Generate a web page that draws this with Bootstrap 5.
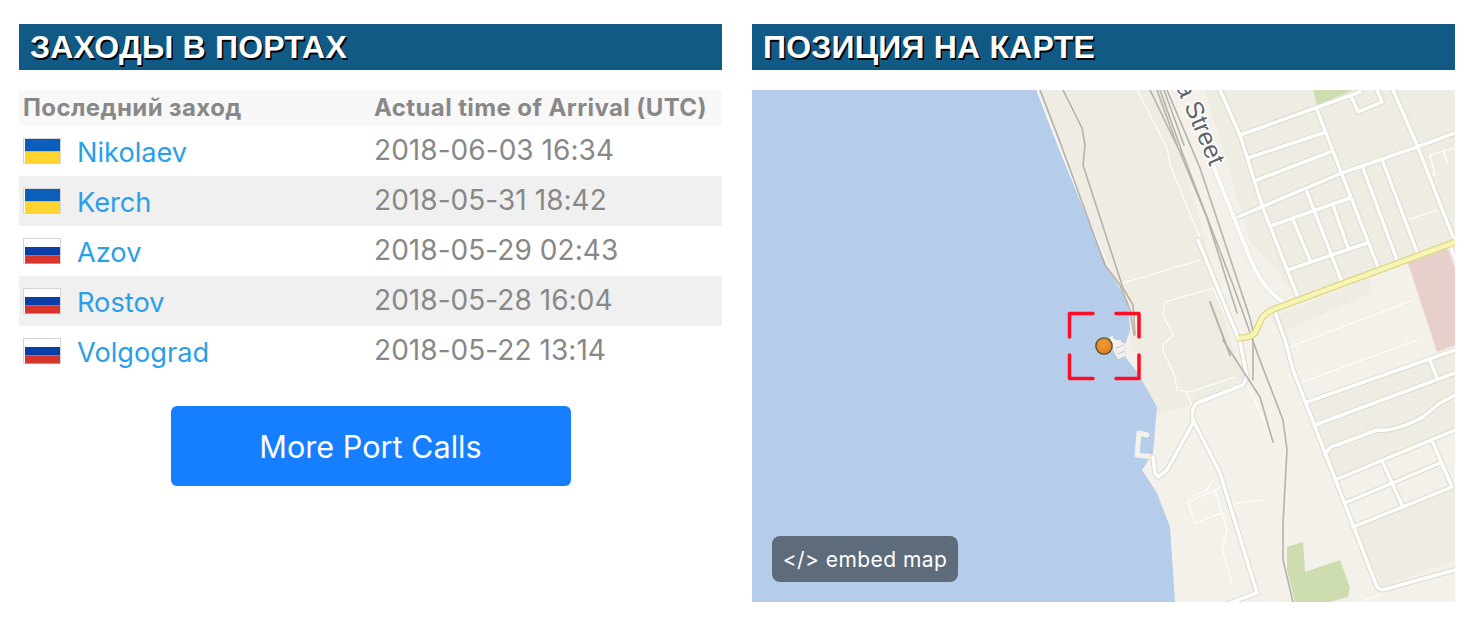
<!DOCTYPE html>
<html lang="ru">
<head>
<meta charset="utf-8">
<title>Порты</title>
<link rel="stylesheet" href="https://cdn.jsdelivr.net/npm/bootstrap@5.3.0/dist/css/bootstrap.min.css">
<style>
html,body{background:#fff;overflow:hidden}
body{font-family:Inter,"Liberation Sans",sans-serif;color:#888}
.page-wrap{padding:24px 19px 0;gap:30px}
.pane{flex:1 1 0;min-width:0}
.pane-title{background:#105A85;color:#fff;height:46px;margin:0 0 20px;padding-left:11px;font:700 32px/46px "Liberation Sans",sans-serif;letter-spacing:.2px;text-transform:uppercase;text-shadow:1px 1px 0 #000,1.5px 1.5px 0 #000}
.ports{width:703px;margin:0;table-layout:fixed;border-collapse:collapse}
.ports th{background:#F8F8F8;color:#888;font-size:24px;line-height:36px;height:36px;padding:0 0 0 4px;font-weight:700;border:0;white-space:nowrap;letter-spacing:.4px}
.ports td{height:50px;padding:0 0 0 4px;border:0;background:transparent;color:#888;font-size:28px;letter-spacing:.05px;line-height:48px;vertical-align:top;box-shadow:none;white-space:nowrap}
.ports tr:nth-child(even) td{background:#F0F0F0}
.ports .c-time{width:352px}
.ports .c-name{line-height:46px;padding-top:4px;font-size:27.2px;letter-spacing:0}
.port-link{color:#2A9FE9;text-decoration:none;margin-left:16px}
.flag{display:inline-block;vertical-align:top;margin-top:8px;width:38px;height:26px}
.more-btn{display:block;width:400px;height:80px;line-height:82px;margin:30px auto 0;padding:0;background:#157FFF;border:0;border-radius:6px;color:#fff;font-size:30.6px}
.more-btn:hover{background:#157FFF;color:#fff}
.map-box{height:512px;overflow:hidden}
.map-svg{display:block}
.embed-btn{position:absolute;left:20px;bottom:20px;width:186px;height:46px;line-height:48px;padding:0;background:#5D6B7A;border:0;border-radius:8px;color:#fff;font-size:21px;letter-spacing:.45px}
.embed-btn:hover{background:#5D6B7A;color:#fff}
.map-label{font:25px "Liberation Sans",sans-serif;fill:#5f6468;stroke:#fff;stroke-width:3px;paint-order:stroke}
</style>
</head>
<body>
<svg width="0" height="0" class="position-absolute">
<defs>
<g id="fl-ua"><rect x=".5" y=".5" width="37" height="25" fill="#fff" stroke="#d4d4d4"/><rect x="2" y="1" width="35" height="12.5" fill="#0C5EBB"/><rect x="2" y="13.5" width="35" height="12" fill="#FFD42F"/></g>
<g id="fl-ru"><rect x=".5" y=".5" width="37" height="25" fill="#fff" stroke="#d4d4d4"/><rect x="2" y="9" width="35" height="8.5" fill="#0B3FA8"/><rect x="2" y="17.5" width="35" height="8" fill="#D5352B"/></g>
<radialGradient id="dot" cx=".45" cy=".4" r=".6"><stop offset="0" stop-color="#F39A30"/><stop offset="1" stop-color="#DD8424"/></radialGradient>
</defs>
</svg>
<div class="d-flex page-wrap">
  <section class="pane">
    <h2 class="pane-title">Заходы в портах</h2>
    <table class="table ports">
      <thead><tr><th>Последний заход</th><th class="c-time">Actual time of Arrival (UTC)</th></tr></thead>
      <tbody>
        <tr><td class="c-name"><svg class="flag"><use href="#fl-ua"/></svg><a class="port-link" href="#">Nikolaev</a></td><td>2018-06-03 16:34</td></tr>
        <tr><td class="c-name"><svg class="flag"><use href="#fl-ua"/></svg><a class="port-link" href="#">Kerch</a></td><td>2018-05-31 18:42</td></tr>
        <tr><td class="c-name"><svg class="flag"><use href="#fl-ru"/></svg><a class="port-link" href="#">Azov</a></td><td>2018-05-29 02:43</td></tr>
        <tr><td class="c-name"><svg class="flag"><use href="#fl-ru"/></svg><a class="port-link" href="#">Rostov</a></td><td>2018-05-28 16:04</td></tr>
        <tr><td class="c-name"><svg class="flag"><use href="#fl-ru"/></svg><a class="port-link" href="#">Volgograd</a></td><td>2018-05-22 13:14</td></tr>
      </tbody>
    </table>
    <a href="#" class="btn more-btn">More Port Calls</a>
  </section>
  <section class="pane">
    <h2 class="pane-title">Позиция на карте</h2>
    <div class="map-box position-relative">
      <svg class="map-svg" width="703" height="512" viewBox="752 90 703 512" fill="none" stroke-linecap="round" stroke-linejoin="round">
        <rect x="752" y="90" width="703" height="512" fill="#F3F1E9"/>
        <!-- darker land areas -->
        <path d="M1037 90H1163L1205 240L1235 357L1247 377L1197 403L1157 415L1130 340L1100 260Z" fill="#EEECE3"/>
        <path d="M1205 90H1455V240L1300 300L1250 240ZM1283 332L1372 292L1370 278L1270 318Z" fill="#EEECE3"/>
        <path d="M1307 402L1455 350V430L1335 480ZM1353 527L1455 487V560L1383 587Z" fill="#EEECE3"/>
        <path d="M1408 263L1447 248L1455 268V345L1437 352Z" fill="#E7D0CC"/>
        <path d="M1313 90H1353L1317 105ZM1287 547L1303 542L1305 572L1340 560L1350 588L1348 597L1330 602H1295L1287 570Z" fill="#CDDDAF"/>
        <!-- water -->
        <path d="M752 90H1037L1057 142L1110 272L1128 302L1130 330L1125 345L1126 358L1138 373L1157 407L1153 453L1142 470L1157 493L1170 527L1175 602H752Z" fill="#B5CDEB"/>
        <!-- piers -->
        <path d="M1147 435L1139 433L1137 455L1153 457" stroke="#F3F1E9" stroke-width="5"/>
        <path d="M1110 337L1114 352L1118 359L1126 356L1124 343Z" fill="#F3F1E9"/>
        <path d="M1112 337L1112 346L1120 341M1115 349L1125 345M1117 354L1125 351" stroke="#F3F1E9" stroke-width="2.5"/>
        <path d="M1116 348L1124 345M1118 354L1125 351" stroke="#B5CDEB"/>
        <!-- thin roads -->
        <g stroke="#fff" stroke-width="1.2">
          <path d="M1037 90L1057 142L1110 272"/>
          <path d="M1137 90L1167 148L1170 165L1200 238"/>
          <path d="M1123 283L1200 260"/>
          <path d="M1213 288L1165 302L1163 315L1173 335L1163 345L1163 350L1175 377L1177 390L1190 392L1235 377"/>
          <path d="M1213 288L1224 312"/>
          <path d="M1407 220L1437 210M1290 347L1413 300M1300 383L1417 340M1430 155L1455 148"/>
          <path d="M1430 155L1435 175L1427 178M1443 150L1448 165"/>
          <path d="M1222 487L1188 502L1195 523L1222 513L1215 490L1227 530L1222 550L1232 583M1195 495L1207 490L1212 482"/>
          <path d="M1230 505L1245 502L1263 500"/>
          <path d="M1186 392L1193 408M1250 390L1265 423"/>
          <path d="M1383 593L1360 602"/>
        </g>
        <!-- street roads -->
        <g id="street">
          <path d="M1220 90L1240 135L1263 208L1297 295"/>
          <path d="M1393 90L1417 145L1455 242"/>
          <path d="M1240 135L1360 92M1248 158L1323 133M1257 180L1330 152M1238 217L1342 173L1417 147L1455 133"/>
          <path d="M1273 225L1350 198M1288 270L1367 243"/>
          <path d="M1317 110L1378 267M1363 168L1397 260M1383 162L1417 252"/>
          <path d="M1307 192L1342 282M1293 220L1310 260M1333 205L1348 248"/>
          <path d="M1352 98L1358 112L1382 102L1377 90"/>
          <path d="M1275 312L1285 340L1293 370L1377 587Q1380 591 1386 589L1455 570"/>
          <path d="M1307 402L1455 350M1315 425L1455 373M1430 360L1437 378"/>
          <path d="M1325 455Q1330 445 1337 445L1377 430Q1395 432 1423 417L1440 403L1455 395"/>
          <path d="M1335 480L1455 430M1345 503L1440 463M1353 527L1452 487L1433 443M1383 463L1402 505"/>
          <path d="M1198 240L1240 342L1247 377L1243 385L1197 403Q1191 408 1193 420L1220 473L1257 593L1227 604"/>
          <path d="M1193 423L1167 470L1158 477L1155 473L1153 457"/>
          <path d="M1455 258L1450 246"/>
        </g>
        <use href="#street" stroke="#DCD9CE" stroke-width="5.5"/>
        <use href="#street" stroke="#fff" stroke-width="3.5"/>
        <path d="M1213 165L1250 258Q1262 288 1283 302" stroke="#E3E0D6" stroke-width="5.5"/>
        <path d="M1213 165L1250 258Q1262 288 1283 302" stroke="#fff" stroke-width="4"/>
        <!-- rail -->
        <g stroke="#B4B2AA" stroke-width="1.6">
          <path d="M1040 90L1060 142L1105 265L1120 285L1130 310L1134 335"/>
          <path d="M1063 90L1082 128L1085 145L1083 165L1123 288L1133 305L1135 335"/>
          <path d="M1160 90L1182 152L1233 285L1258 355L1283 420L1287 450L1283 523L1283 560L1293 602"/>
          <path d="M1150 90L1180 152L1207 218L1237 313"/>
          <path d="M1167 90L1200 168L1250 318L1254 336"/>
          <path d="M1157 90L1177 145M1164 90L1184 145"/>
          <path d="M1253 340L1253 380"/>
          <path d="M1223 340L1247 377L1260 397L1273 442"/>
          <path d="M1210 302L1230 355" stroke-width="2"/>
        </g>
        <!-- highway -->
        <path d="M1455 242L1277 308Q1263 313 1260 322L1255 333Q1250 338 1238 338" stroke="#DCD78A" stroke-width="7" stroke-linecap="butt"/>
        <path d="M1455 242L1277 308Q1263 313 1260 322L1255 333Q1250 338 1238 338" stroke="#F8F4B4" stroke-width="4.5" stroke-linecap="butt"/>
        <text class="map-label" text-anchor="end" transform="translate(1210 167) rotate(67)">a Street</text>
        <!-- target -->
        <path d="M1069.500 337V313.500H1093M1116 313.500H1139V337M1069.500 355V378.500H1093M1116 378.500H1139V355" stroke="#FF0D22" stroke-width="3.500"/>
        <circle cx="1104" cy="346" r="8.200" fill="url(#dot)" stroke="#5A4A2A" stroke-width="1.300"/>
      </svg>
      <a href="#" class="btn embed-btn">&lt;/&gt; embed map</a>
    </div>
  </section>
</div>
</body>
</html>
